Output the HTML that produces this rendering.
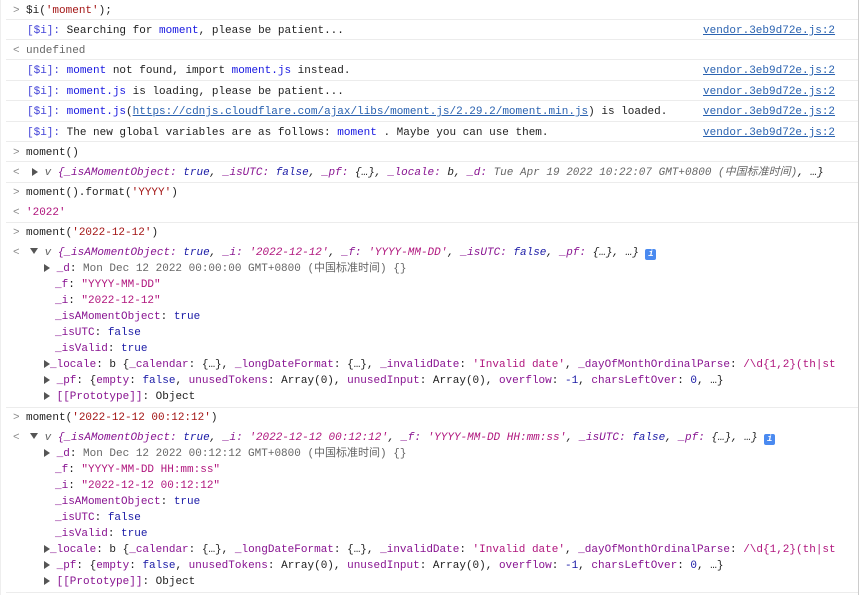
<!DOCTYPE html>
<html><head><meta charset="utf-8"><style>
body{margin:0;width:865px;height:595px;background:#fff;overflow:hidden;position:relative;font-family:"Liberation Mono","Noto Sans CJK SC",monospace;font-size:11px;color:#1e1e1e;}
.w{position:absolute;left:0;top:1px;width:865px;height:595px;}
.r{position:absolute;left:0;width:858px;white-space:pre;line-height:14px;}
.sep{position:absolute;left:6px;width:852px;height:1px;background:#ececec;}
.ch{position:absolute;left:13px;color:#888;}
.p{color:#4343d8}
.b{color:#1616e0}
.k{color:#881391}
.s{color:#b0157d}
.n{color:#1a1aa6}
.g{color:#666}
.it{font-style:italic}
.lk{position:absolute;left:703px;color:#2a62b0;text-decoration:underline;}
.tri{display:inline-block;width:0;height:0;border-left:6px solid #555;border-top:4px solid transparent;border-bottom:4px solid transparent;vertical-align:-1px;}
.trd{display:inline-block;width:0;height:0;border-top:6px solid #555;border-left:4px solid transparent;border-right:4px solid transparent;vertical-align:1px;}
.info{display:inline-block;width:11px;height:11px;background:#4a8af0;color:#fff;border-radius:2px;font-size:9px;line-height:11px;text-align:center;font-style:italic;font-weight:bold;vertical-align:-1px;}
</style></head><body>
<div style="position:absolute;left:858px;top:0;width:1px;height:595px;background:#ccc"></div>
<div style="position:absolute;left:0;top:0;width:1px;height:595px;background:#eee"></div>
<div class="w">
<div class="r" style="top:3px"><span class="ch">&gt;</span><span style="position:absolute;left:26px">$i(<span style="color:#a31515">'moment'</span>);</span></div>
<div class="sep" style="top:18px"></div>
<div class="r" style="top:23px"><span style="position:absolute;left:27px"><span class="p">[$i]:</span> Searching for <span class="b">moment</span>, please be patient...</span><span class="lk">vendor.3eb9d72e.js:2</span></div>
<div class="sep" style="top:38px"></div>
<div class="r" style="top:43px"><span class="ch">&lt;</span><span class="g" style="position:absolute;left:26px">undefined</span></div>
<div class="sep" style="top:58px"></div>
<div class="r" style="top:63px"><span style="position:absolute;left:27px"><span class="p">[$i]:</span> <span class="b">moment</span> not found, import <span class="b">moment.js</span> instead.</span><span class="lk">vendor.3eb9d72e.js:2</span></div>
<div class="sep" style="top:79px"></div>
<div class="r" style="top:84px"><span style="position:absolute;left:27px"><span class="p">[$i]:</span> <span class="b">moment.js</span> is loading, please be patient...</span><span class="lk">vendor.3eb9d72e.js:2</span></div>
<div class="sep" style="top:99px"></div>
<div class="r" style="top:104px"><span style="position:absolute;left:27px"><span class="p">[$i]:</span> <span class="b">moment.js</span>(<span style="color:#2a62b0;text-decoration:underline">https://cdnjs.cloudflare.com/ajax/libs/moment.js/2.29.2/moment.min.js</span>) is loaded.</span><span class="lk">vendor.3eb9d72e.js:2</span></div>
<div class="sep" style="top:120px"></div>
<div class="r" style="top:125px"><span style="position:absolute;left:27px"><span class="p">[$i]:</span> The new global variables are as follows: <span class="b">moment</span> . Maybe you can use them.</span><span class="lk">vendor.3eb9d72e.js:2</span></div>
<div class="sep" style="top:140px"></div>
<div class="r" style="top:145px"><span class="ch">&gt;</span><span style="position:absolute;left:26px">moment()</span></div>
<div class="sep" style="top:160px"></div>
<div class="r" style="top:165px"><span class="ch">&lt;</span><span class="it" style="position:absolute;left:32px"><span class="tri" style="font-style:normal"></span> <span class="g">v</span> <span class="k">{_isAMomentObject:</span> <span class="n">true</span>, <span class="k">_isUTC:</span> <span class="n">false</span>, <span class="k">_pf:</span> {…}, <span class="k">_locale:</span> b, <span class="k">_d:</span> <span class="g">Tue Apr 19 2022 10:22:07 GMT+0800 (中国标准时间)</span>, …}</span></div>
<div class="sep" style="top:181px"></div>
<div class="r" style="top:185px"><span class="ch">&gt;</span><span style="position:absolute;left:26px">moment().format(<span style="color:#a31515">'YYYY'</span>)</span></div>
<div class="r" style="top:205px"><span class="ch">&lt;</span><span class="s" style="position:absolute;left:26px">'2022'</span></div>
<div class="sep" style="top:221px"></div>
<div class="r" style="top:225px"><span class="ch">&gt;</span><span style="position:absolute;left:26px">moment(<span style="color:#a31515">'2022-12-12'</span>)</span></div>
<div class="r" style="top:245px"><span class="ch">&lt;</span><span class="it" style="position:absolute;left:30px"><span class="trd"></span> <span class="g">v</span> <span class="k">{_isAMomentObject:</span> <span class="n">true</span>, <span class="k">_i:</span> <span class="s">'2022-12-12'</span>, <span class="k">_f:</span> <span class="s">'YYYY-MM-DD'</span>, <span class="k">_isUTC:</span> <span class="n">false</span>, <span class="k">_pf:</span> {…}, …} <span class="info">i</span></span></div>
<div class="r" style="top:261px"><span style="position:absolute;left:44px"><span class="tri"></span> <span class="k">_d</span>: <span class="g">Mon Dec 12 2022 00:00:00 GMT+0800 (中国标准时间) {}</span></span></div>
<div class="r" style="top:277px"><span style="position:absolute;left:55px"><span class="k">_f</span>: <span class="s">"YYYY-MM-DD"</span></span></div>
<div class="r" style="top:293px"><span style="position:absolute;left:55px"><span class="k">_i</span>: <span class="s">"2022-12-12"</span></span></div>
<div class="r" style="top:309px"><span style="position:absolute;left:55px"><span class="k">_isAMomentObject</span>: <span class="n">true</span></span></div>
<div class="r" style="top:325px"><span style="position:absolute;left:55px"><span class="k">_isUTC</span>: <span class="n">false</span></span></div>
<div class="r" style="top:341px"><span style="position:absolute;left:55px"><span class="k">_isValid</span>: <span class="n">true</span></span></div>
<div class="r" style="top:357px"><span style="position:absolute;left:44px"><span class="tri"></span><span class="k">_locale</span>: b {<span class="k">_calendar</span>: {…}, <span class="k">_longDateFormat</span>: {…}, <span class="k">_invalidDate</span>: <span class="s">'Invalid date'</span>, <span class="k">_dayOfMonthOrdinalParse</span>: <span class="s">/\d{1,2}(th|st</span></span></div>
<div class="r" style="top:373px"><span style="position:absolute;left:44px"><span class="tri"></span> <span class="k">_pf</span>: {<span class="k">empty</span>: <span class="n">false</span>, <span class="k">unusedTokens</span>: Array(0), <span class="k">unusedInput</span>: Array(0), <span class="k">overflow</span>: <span class="n">-1</span>, <span class="k">charsLeftOver</span>: <span class="n">0</span>, …}</span></div>
<div class="r" style="top:389px"><span style="position:absolute;left:44px"><span class="tri"></span> <span class="k">[[Prototype]]</span>: Object</span></div>
<div class="sep" style="top:406px"></div>
<div class="r" style="top:410px"><span class="ch">&gt;</span><span style="position:absolute;left:26px">moment(<span style="color:#a31515">'2022-12-12 00:12:12'</span>)</span></div>
<div class="r" style="top:430px"><span class="ch">&lt;</span><span class="it" style="position:absolute;left:30px"><span class="trd"></span> <span class="g">v</span> <span class="k">{_isAMomentObject:</span> <span class="n">true</span>, <span class="k">_i:</span> <span class="s">'2022-12-12 00:12:12'</span>, <span class="k">_f:</span> <span class="s">'YYYY-MM-DD HH:mm:ss'</span>, <span class="k">_isUTC:</span> <span class="n">false</span>, <span class="k">_pf:</span> {…}, …} <span class="info">i</span></span></div>
<div class="r" style="top:446px"><span style="position:absolute;left:44px"><span class="tri"></span> <span class="k">_d</span>: <span class="g">Mon Dec 12 2022 00:12:12 GMT+0800 (中国标准时间) {}</span></span></div>
<div class="r" style="top:462px"><span style="position:absolute;left:55px"><span class="k">_f</span>: <span class="s">"YYYY-MM-DD HH:mm:ss"</span></span></div>
<div class="r" style="top:478px"><span style="position:absolute;left:55px"><span class="k">_i</span>: <span class="s">"2022-12-12 00:12:12"</span></span></div>
<div class="r" style="top:494px"><span style="position:absolute;left:55px"><span class="k">_isAMomentObject</span>: <span class="n">true</span></span></div>
<div class="r" style="top:510px"><span style="position:absolute;left:55px"><span class="k">_isUTC</span>: <span class="n">false</span></span></div>
<div class="r" style="top:526px"><span style="position:absolute;left:55px"><span class="k">_isValid</span>: <span class="n">true</span></span></div>
<div class="r" style="top:542px"><span style="position:absolute;left:44px"><span class="tri"></span><span class="k">_locale</span>: b {<span class="k">_calendar</span>: {…}, <span class="k">_longDateFormat</span>: {…}, <span class="k">_invalidDate</span>: <span class="s">'Invalid date'</span>, <span class="k">_dayOfMonthOrdinalParse</span>: <span class="s">/\d{1,2}(th|st</span></span></div>
<div class="r" style="top:558px"><span style="position:absolute;left:44px"><span class="tri"></span> <span class="k">_pf</span>: {<span class="k">empty</span>: <span class="n">false</span>, <span class="k">unusedTokens</span>: Array(0), <span class="k">unusedInput</span>: Array(0), <span class="k">overflow</span>: <span class="n">-1</span>, <span class="k">charsLeftOver</span>: <span class="n">0</span>, …}</span></div>
<div class="r" style="top:574px"><span style="position:absolute;left:44px"><span class="tri"></span> <span class="k">[[Prototype]]</span>: Object</span></div>
<div class="sep" style="top:591px"></div>
</div>
</body></html>
